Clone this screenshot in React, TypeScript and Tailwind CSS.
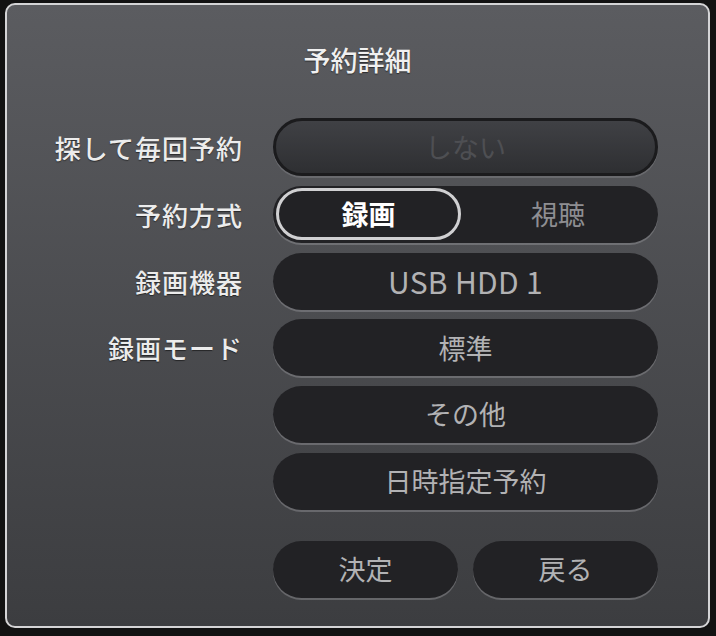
import React from "react";

const font = { fontFamily: '"Noto Sans CJK JP", "Noto Sans", sans-serif' };

function Pill({ children }: { children: React.ReactNode }) {
  return (
    <div className="h-[57px] w-[385px] rounded-full bg-[#222225] flex items-center justify-center text-[27px] text-[#b2b2b4] shadow-[0_2px_0_rgba(150,150,155,0.45)]">
      {children}
    </div>
  );
}

function Label({ children }: { children?: React.ReactNode }) {
  return (
    <div className="w-[236px] text-right text-[26px] tracking-[1px] text-[#ececec] font-medium [text-shadow:0_1px_1px_rgba(0,0,0,0.5)]">
      {children}
    </div>
  );
}

export default function App() {
  return (
    <div className="w-[716px] h-[636px] bg-[#121212] overflow-hidden pt-[3px] pl-[5px]" style={font}>
      <div className="w-[705px] h-[625px] rounded-[10px] border-2 border-[#d4d4d6] bg-gradient-to-b from-[#5b5c60] to-[#3c3d40] flex flex-col">
        <div className="h-[113px] pt-[39px] text-center text-[27px] leading-[32px] text-[#f0f0f0] font-medium [text-shadow:0_1px_1px_rgba(0,0,0,0.5)]">
          予約詳細
        </div>
        <div className="flex flex-col gap-[9.8px]">
          <div className="flex items-center gap-[30px]">
            <Label>探して毎回予約</Label>
            <div className="h-[58px] w-[385px] rounded-full border-[3px] border-[#1b1b1d] bg-gradient-to-b from-[#404145] to-[#2e2f32] flex items-center justify-center text-[27px] text-[#4e4f53] shadow-[0_2px_0_rgba(150,150,155,0.35)]">
              しない
            </div>
          </div>
          <div className="flex items-center gap-[30px]">
            <Label>予約方式</Label>
            <div className="h-[57px] w-[385px] rounded-full bg-[#222225] flex items-center p-[3px] shadow-[0_2px_0_rgba(150,150,155,0.45)]">
              <div className="h-[52px] w-[185px] rounded-full border-[3px] border-[#d0d0d2] flex items-center justify-center text-[27px] text-white font-bold">
                録画
              </div>
              <div className="flex-1 text-center text-[27px] text-[#8e8e92]">視聴</div>
            </div>
          </div>
          <div className="flex items-center gap-[30px]">
            <Label>録画機器</Label>
            <Pill>
              <span className="text-[30px] tracking-[0.3px]">USB HDD 1</span>
            </Pill>
          </div>
          <div className="flex items-center gap-[30px]">
            <Label>録画モード</Label>
            <Pill>標準</Pill>
          </div>
          <div className="flex items-center gap-[30px]">
            <Label />
            <Pill>その他</Pill>
          </div>
          <div className="flex items-center gap-[30px]">
            <Label />
            <Pill>日時指定予約</Pill>
          </div>
        </div>
        <div className="mt-[31px] flex gap-[15px] pl-[266px]">
          <div className="h-[57px] w-[185px] rounded-full bg-[#222225] flex items-center justify-center text-[27px] text-[#b2b2b4] shadow-[0_2px_0_rgba(150,150,155,0.45)]">
            決定
          </div>
          <div className="h-[57px] w-[185px] rounded-full bg-[#222225] flex items-center justify-center text-[27px] text-[#b2b2b4] shadow-[0_2px_0_rgba(150,150,155,0.45)]">
            戻る
          </div>
        </div>
      </div>
    </div>
  );
}
